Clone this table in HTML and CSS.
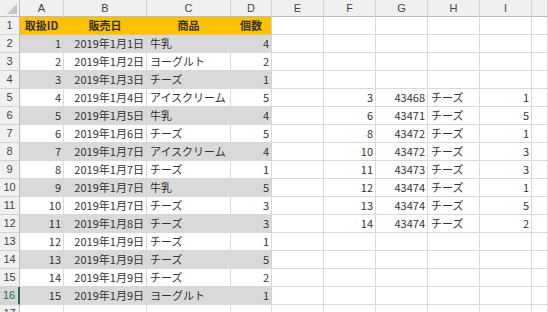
FILE: index.html
```html
<!DOCTYPE html>
<html lang="ja">
<head>
<meta charset="utf-8">
<link rel="stylesheet" href="styles.css">
</head>
<body>
<div class="sheet">
  <div class="row head">
    <div class="corner"><span class="tri"></span></div>
    <div class="ch">A</div><div class="ch">B</div><div class="ch">C</div><div class="ch">D</div><div class="ch">E</div><div class="ch">F</div><div class="ch">G</div><div class="ch">H</div><div class="ch">I</div><div class="ch"></div>
  </div>
  <div class="row">
    <div class="rh">1</div>
    <div class="c o ctr b">取扱ID</div><div class="c o ctr b">販売日</div><div class="c o ctr b">商品</div><div class="c o ctr b last">個数</div>
    <div class="c"></div><div class="c"></div><div class="c"></div><div class="c"></div><div class="c"></div><div class="c"></div>
  </div>
  <div class="row">
    <div class="rh">2</div>
    <div class="c g r">1</div><div class="c g r">2019年1月1日</div><div class="c g l">牛乳</div><div class="c g r last">4</div>
    <div class="c"></div><div class="c"></div><div class="c"></div><div class="c"></div><div class="c"></div><div class="c"></div>
  </div>
  <div class="row">
    <div class="rh">3</div>
    <div class="c r">2</div><div class="c r">2019年1月2日</div><div class="c l">ヨーグルト</div><div class="c r">2</div>
    <div class="c"></div><div class="c"></div><div class="c"></div><div class="c"></div><div class="c"></div><div class="c"></div>
  </div>
  <div class="row">
    <div class="rh">4</div>
    <div class="c g r">3</div><div class="c g r">2019年1月3日</div><div class="c g l">チーズ</div><div class="c g r last">1</div>
    <div class="c"></div><div class="c"></div><div class="c"></div><div class="c"></div><div class="c"></div><div class="c"></div>
  </div>
  <div class="row">
    <div class="rh">5</div>
    <div class="c r">4</div><div class="c r">2019年1月4日</div><div class="c l">アイスクリーム</div><div class="c r">5</div>
    <div class="c"></div><div class="c r">3</div><div class="c r">43468</div><div class="c l">チーズ</div><div class="c r">1</div><div class="c"></div>
  </div>
  <div class="row">
    <div class="rh">6</div>
    <div class="c g r">5</div><div class="c g r">2019年1月5日</div><div class="c g l">牛乳</div><div class="c g r last">4</div>
    <div class="c"></div><div class="c r">6</div><div class="c r">43471</div><div class="c l">チーズ</div><div class="c r">5</div><div class="c"></div>
  </div>
  <div class="row">
    <div class="rh">7</div>
    <div class="c r">6</div><div class="c r">2019年1月6日</div><div class="c l">チーズ</div><div class="c r">5</div>
    <div class="c"></div><div class="c r">8</div><div class="c r">43472</div><div class="c l">チーズ</div><div class="c r">1</div><div class="c"></div>
  </div>
  <div class="row">
    <div class="rh">8</div>
    <div class="c g r">7</div><div class="c g r">2019年1月7日</div><div class="c g l">アイスクリーム</div><div class="c g r last">4</div>
    <div class="c"></div><div class="c r">10</div><div class="c r">43472</div><div class="c l">チーズ</div><div class="c r">3</div><div class="c"></div>
  </div>
  <div class="row">
    <div class="rh">9</div>
    <div class="c r">8</div><div class="c r">2019年1月7日</div><div class="c l">チーズ</div><div class="c r">1</div>
    <div class="c"></div><div class="c r">11</div><div class="c r">43473</div><div class="c l">チーズ</div><div class="c r">3</div><div class="c"></div>
  </div>
  <div class="row">
    <div class="rh">10</div>
    <div class="c g r">9</div><div class="c g r">2019年1月7日</div><div class="c g l">牛乳</div><div class="c g r last">5</div>
    <div class="c"></div><div class="c r">12</div><div class="c r">43474</div><div class="c l">チーズ</div><div class="c r">1</div><div class="c"></div>
  </div>
  <div class="row">
    <div class="rh">11</div>
    <div class="c r">10</div><div class="c r">2019年1月7日</div><div class="c l">チーズ</div><div class="c r">3</div>
    <div class="c"></div><div class="c r">13</div><div class="c r">43474</div><div class="c l">チーズ</div><div class="c r">5</div><div class="c"></div>
  </div>
  <div class="row">
    <div class="rh">12</div>
    <div class="c g r">11</div><div class="c g r">2019年1月8日</div><div class="c g l">チーズ</div><div class="c g r last">3</div>
    <div class="c"></div><div class="c r">14</div><div class="c r">43474</div><div class="c l">チーズ</div><div class="c r">2</div><div class="c"></div>
  </div>
  <div class="row">
    <div class="rh">13</div>
    <div class="c r">12</div><div class="c r">2019年1月9日</div><div class="c l">チーズ</div><div class="c r">1</div>
    <div class="c"></div><div class="c"></div><div class="c"></div><div class="c"></div><div class="c"></div><div class="c"></div>
  </div>
  <div class="row">
    <div class="rh">14</div>
    <div class="c g r">13</div><div class="c g r">2019年1月9日</div><div class="c g l">チーズ</div><div class="c g r last">5</div>
    <div class="c"></div><div class="c"></div><div class="c"></div><div class="c"></div><div class="c"></div><div class="c"></div>
  </div>
  <div class="row">
    <div class="rh">15</div>
    <div class="c r">14</div><div class="c r">2019年1月9日</div><div class="c l">チーズ</div><div class="c r">2</div>
    <div class="c"></div><div class="c"></div><div class="c"></div><div class="c"></div><div class="c"></div><div class="c"></div>
  </div>
  <div class="row">
    <div class="rh sel">16</div>
    <div class="c g r">15</div><div class="c g r">2019年1月9日</div><div class="c g l">ヨーグルト</div><div class="c g r last">1</div>
    <div class="c"></div><div class="c"></div><div class="c"></div><div class="c"></div><div class="c"></div><div class="c"></div>
  </div>
  <div class="row">
    <div class="rh">17</div>
    <div class="c"></div><div class="c"></div><div class="c"></div><div class="c"></div>
    <div class="c"></div><div class="c"></div><div class="c"></div><div class="c"></div><div class="c"></div><div class="c"></div>
  </div>
</div>
</body>
</html>
```

FILE: styles.css
```css
html, body {
  margin: 0;
  padding: 0;
  background: #ffffff;
  overflow: hidden;
}
body {
  width: 548px;
  height: 312px;
  font-family: "Noto Sans CJK JP", "Noto Sans", sans-serif;
  font-size: 11px;
  color: #333333;
}
.sheet {
  display: flex;
  flex-direction: column;
}
.row {
  display: grid;
  grid-template-columns: 20px 44px 83px 84px 41px 52px 52px 52px 52px 52px 16px;
  height: 18px;
}
.row.head {
  height: 17px;
}
.row > div {
  box-sizing: border-box;
  border-right: 1px solid #d9d9d9;
  border-bottom: 1px solid #d9d9d9;
  line-height: 17px;
  white-space: nowrap;
  overflow: hidden;
}
.head > div {
  background: #f0f0f0;
  color: #444444;
  text-align: center;
  font-family: "Liberation Sans", "Noto Sans", sans-serif;
  font-size: 11px;
  line-height: 16px;
  border-right: 1px solid #d4d4d4;
  border-bottom: 1px solid #bdbdbd;
}
.head > .corner {
  position: relative;
  border-right: 1px solid #bdbdbd;
}
.tri {
  position: absolute;
  right: 2px;
  bottom: 2px;
  width: 0;
  height: 0;
  border-left: 10px solid transparent;
  border-bottom: 10px solid #c4c4c4;
}
.row > .rh {
  background: #f0f0f0;
  color: #444444;
  text-align: center;
  font-family: "Liberation Sans", "Noto Sans", sans-serif;
  font-size: 11px;
  border-right: 1px solid #bdbdbd;
  border-bottom: 1px solid #d4d4d4;
}
.row > .rh.sel {
  background: #d6d6d6;
  color: #217346;
  border-right: 2px solid #217346;
}
.c.r {
  text-align: right;
  padding-right: 2px;
}
.c.l {
  text-align: left;
  padding-left: 3px;
}
.c.ctr {
  text-align: center;
}
.c.b {
  font-weight: bold;
}
.row > .c.o {
  background: #ffc000;
  border-right-color: #ffc000;
  border-bottom-color: #e9c44e;
}
.row > .c.g {
  background: #d9d9d9;
  border-right-color: #d9d9d9;
  border-bottom-color: #d9d9d9;
}
.row > .c.last {
  border-right-color: #d4d4d4;
}
```
